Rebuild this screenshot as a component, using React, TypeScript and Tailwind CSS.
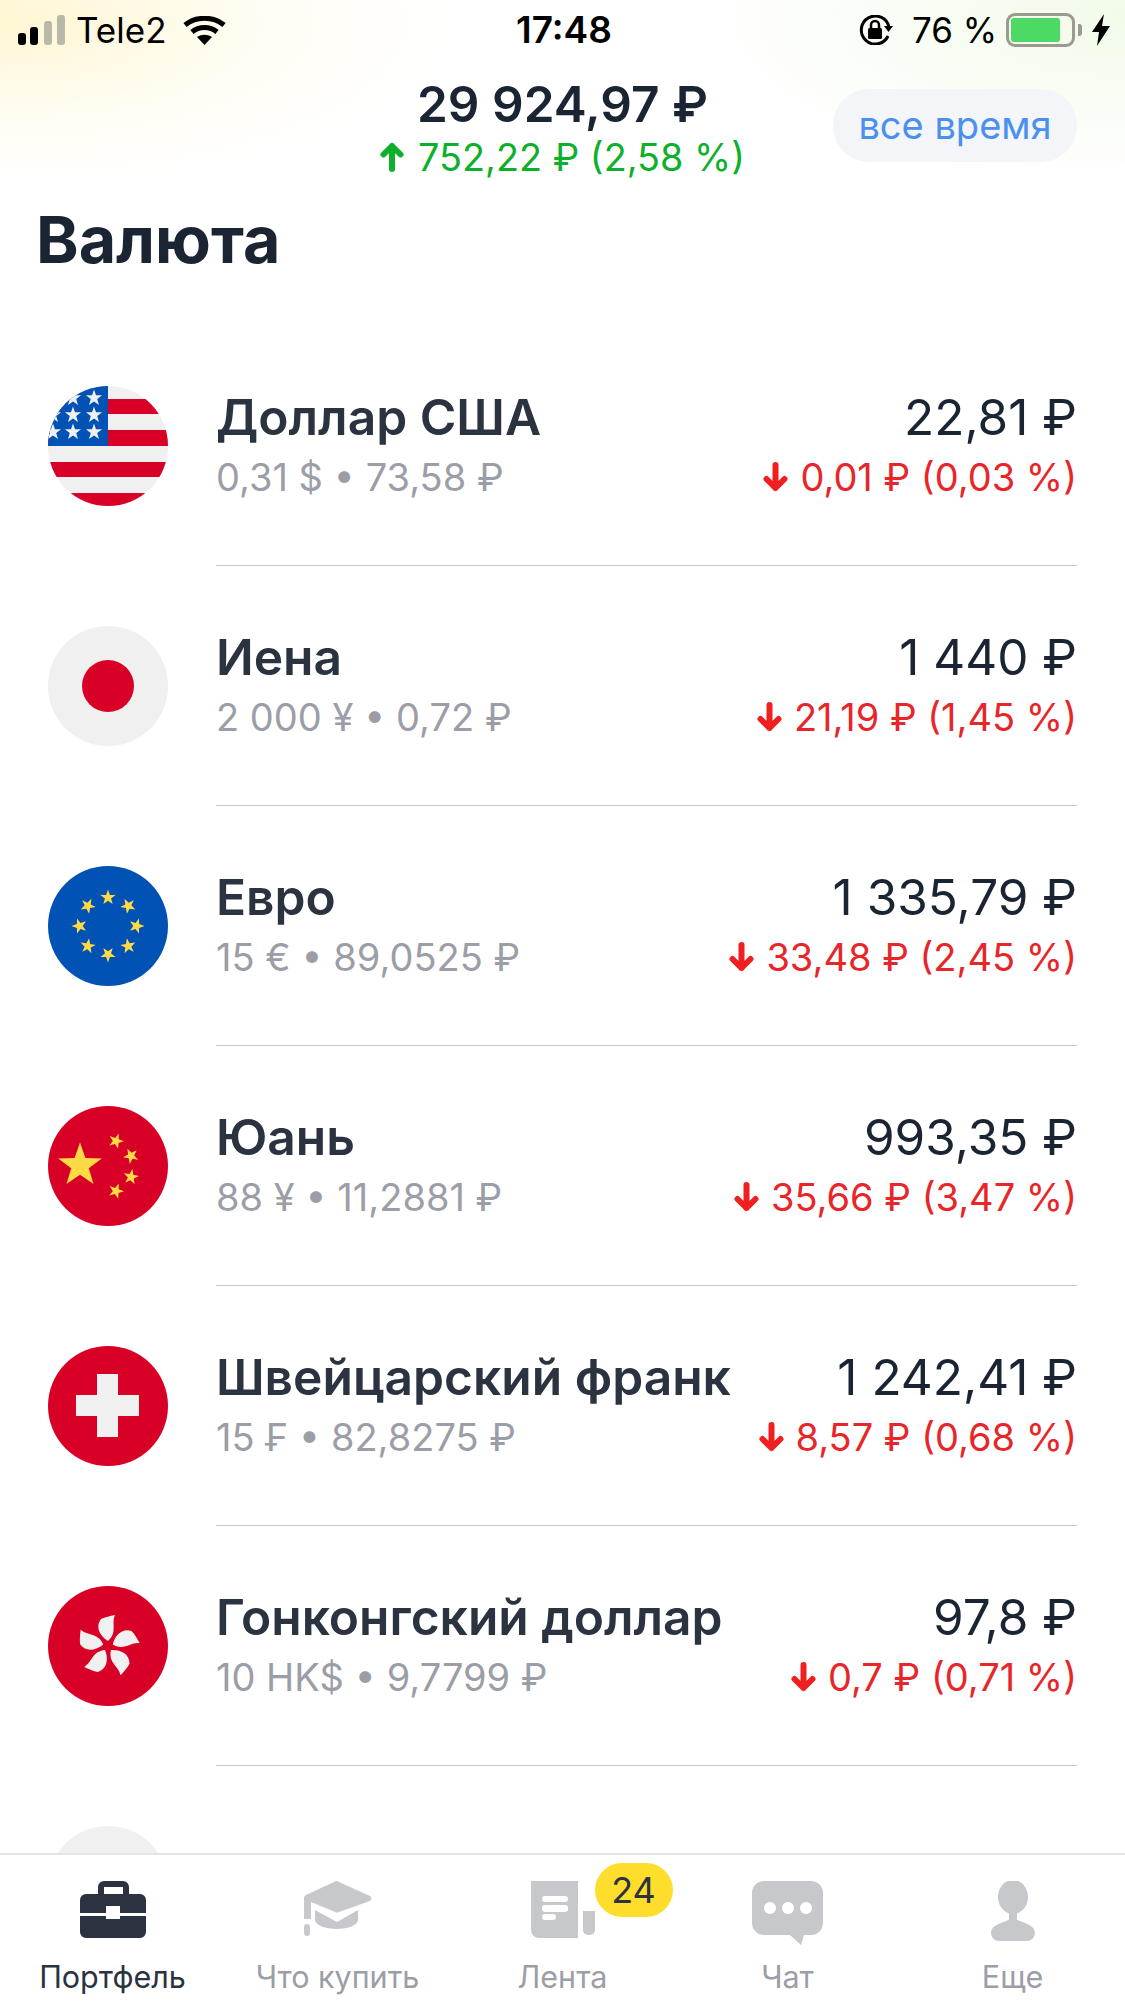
import React from 'react';

const starPoints = (cx: number, cy: number, r: number, rot = 0) => {
  const pts: string[] = [];
  for (let i = 0; i < 10; i++) {
    const rad = i % 2 === 0 ? r : r * 0.4;
    const a = ((-90 + rot + i * 36) * Math.PI) / 180;
    pts.push(`${(cx + rad * Math.cos(a)).toFixed(2)},${(cy + rad * Math.sin(a)).toFixed(2)}`);
  }
  return pts.join(' ');
};

const Star = ({ x, y, r, fill, rot = 0 }: { x: number; y: number; r: number; fill: string; rot?: number }) => (
  <polygon points={starPoints(x, y, r, rot)} fill={fill} />
);

const Flag: React.FC<{ children: React.ReactNode; id: string }> = ({ children, id }) => (
  <svg viewBox="0 0 120 120" className="w-[120px] h-[120px] shrink-0 mt-[60px]">
    <clipPath id={id}>
      <circle cx="60" cy="60" r="60" />
    </clipPath>
    <g clipPath={`url(#${id})`}>{children}</g>
  </svg>
);

const UsFlag = () => (
  <Flag id="us">
    <rect width="120" height="120" fill="#f0f0f0" />
    <rect y="13" width="120" height="15" fill="#d80027" />
    <rect y="44" width="120" height="16" fill="#d80027" />
    <rect y="76" width="120" height="15" fill="#d80027" />
    <rect y="107" width="120" height="13" fill="#d80027" />
    <rect width="60" height="60" fill="#0052b4" />
    {[
      [25, 12],
      [46, 12],
      [25, 29],
      [46, 29],
      [5, 29],
      [5, 46],
      [25, 46],
      [46, 46],
    ].map(([x, y]) => (
      <Star key={`${x}-${y}`} x={x} y={y} r={8.5} fill="#f0f0f0" />
    ))}
  </Flag>
);

const JpFlag = () => (
  <Flag id="jp">
    <rect width="120" height="120" fill="#f0f0f0" />
    <circle cx="60" cy="60" r="26" fill="#d80027" />
  </Flag>
);

const EuFlag = () => (
  <Flag id="eu">
    <rect width="120" height="120" fill="#0052b4" />
    {[0, 45, 90, 135, 180, 225, 270, 315].map((a) => (
      <Star
        key={a}
        x={60 + 28.5 * Math.sin((a * Math.PI) / 180)}
        y={60 - 28.5 * Math.cos((a * Math.PI) / 180)}
        r={8}
        fill="#ffda44"
        rot={a}
      />
    ))}
  </Flag>
);

const CnFlag = () => (
  <Flag id="cn">
    <rect width="120" height="120" fill="#d80027" />
    <Star x={32} y={59.5} r={23} fill="#ffda44" />
    <Star x={68} y={35} r={8} fill="#ffda44" rot={20} />
    <Star x={83} y={50} r={8} fill="#ffda44" rot={45} />
    <Star x={83} y={71} r={8} fill="#ffda44" rot={10} />
    <Star x={68} y={85} r={8} fill="#ffda44" rot={20} />
  </Flag>
);

const ChFlag = () => (
  <Flag id="ch">
    <rect width="120" height="120" fill="#d80027" />
    <path d="M49 28h21v21h21v21H70v21H49V70H28V49h21z" fill="#f0f0f0" />
  </Flag>
);

const HkFlag = () => (
  <Flag id="hk">
    <rect width="120" height="120" fill="#d80027" />
    {[0, 72, 144, 216, 288].map((a) => (
      <path
        key={a}
        transform={`rotate(${a} 60 60)`}
        d="M60 55 C52 50 47 41 53 33 C57 31 62 30 67 29 C63 38 70 46 60 55z"
        fill="#f0f0f0"
      />
    ))}
  </Flag>
);

const BlankFlag = () => (
  <Flag id="blank">
    <rect width="120" height="120" fill="#f0f0f0" />
  </Flag>
);

const ArrowDown = () => (
  <svg viewBox="0 0 25 30" className="w-[25px] h-[30px] shrink-0">
    <path d="M12.500 3v23M3.500 17l9 9 9-9" fill="none" stroke="#f02020" strokeWidth="6" strokeLinecap="round" strokeLinejoin="round" />
  </svg>
);

const ArrowUp = () => (
  <svg viewBox="0 0 24 30" className="w-[24px] h-[30px] shrink-0">
    <path d="M12 27V4M3.500 12.500L12 4l8.500 8.500" fill="none" stroke="#0db02b" strokeWidth="6" strokeLinecap="round" strokeLinejoin="round" />
  </svg>
);

const rows = [
  { flag: <UsFlag />, name: 'Доллар США', sub: '0,31 $ • 73,58 ₽', price: '22,81 ₽', delta: '0,01 ₽ (0,03 %)' },
  { flag: <JpFlag />, name: 'Иена', sub: '2 000 ¥ • 0,72 ₽', price: '1 440 ₽', delta: '21,19 ₽ (1,45 %)' },
  { flag: <EuFlag />, name: 'Евро', sub: '15 € • 89,0525 ₽', price: '1 335,79 ₽', delta: '33,48 ₽ (2,45 %)' },
  { flag: <CnFlag />, name: 'Юань', sub: '88 ¥ • 11,2881 ₽', price: '993,35 ₽', delta: '35,66 ₽ (3,47 %)' },
  { flag: <ChFlag />, name: 'Швейцарский франк', sub: '15 ₣ • 82,8275 ₽', price: '1 242,41 ₽', delta: '8,57 ₽ (0,68 %)' },
  { flag: <HkFlag />, name: 'Гонконгский доллар', sub: '10 HK$ • 9,7799 ₽', price: '97,8 ₽', delta: '0,7 ₽ (0,71 %)' },
];

const StatusBar = () => (
  <div className="h-[60px] flex items-center justify-between pl-[18px] pr-[15px] text-[35px] text-black relative">
    <div className="flex items-center">
      <svg viewBox="0 0 47 30" className="w-[47px] h-[30px]">
        <rect x="0" y="18" width="8" height="12" rx="3" fill="#000" />
        <rect x="12" y="12" width="8" height="18" rx="3" fill="#000" />
        <rect x="26" y="6" width="8" height="24" rx="3" fill="#b9b9a8" />
        <rect x="39" y="0" width="8" height="30" rx="3" fill="#b9b9a8" />
      </svg>
      <span className="ml-[11px] w-[89px]">Tele2</span>
      <svg viewBox="0 0 43 29" className="ml-[18px] w-[43px] h-[29px]">
        <path d="M2 9c11-9 28-9 39 0" fill="none" stroke="#000" strokeWidth="5" />
        <path d="M9 16c7-6 18-6 25 0" fill="none" stroke="#000" strokeWidth="5" />
        <path d="M14 21c5-3 10-3 15 0l-7.500 8z" fill="#000" />
      </svg>
    </div>
    <span className="absolute left-[516px] text-[37px] font-semibold">17:48</span>
    <div className="flex items-center">
      <svg viewBox="0 0 34 30" className="w-[34px] h-[30px]">
        <path d="M29 21A14 14 0 1 1 30 12" fill="none" stroke="#000" strokeWidth="3" />
        <path d="M25 11h9l-4.500 6z" fill="#000" />
        <rect x="9" y="13" width="14" height="11" rx="1.500" fill="#000" />
        <path d="M12 13V10a4 4 0 0 1 8 0v3" fill="none" stroke="#000" strokeWidth="2.500" />
      </svg>
      <span className="ml-[19px] w-[84px] whitespace-nowrap">76 %</span>
      <div className="ml-[10px] w-[69px] h-[34px] rounded-[9px] border-[3px] border-[#9a9a8e] p-[2px] flex">
        <div className="w-[49px] h-full rounded-[3px] bg-[#4cd964]" />
      </div>
      <div className="ml-[3px] w-[4px] h-[12px] rounded-r-[3px] bg-[#9a9a8e]" />
      <svg viewBox="0 0 18 32" className="ml-[10px] w-[18px] h-[32px]">
        <path d="M12 0L0 18h7L5 32 18 12h-8z" fill="#000" />
      </svg>
    </div>
  </div>
);

const Header = () => (
  <div>
    <div className="h-[190px] bg-[radial-gradient(ellipse_460px_168px_at_0%_12%,#fff6d2_0%,#fffdf3_55%,transparent_100%),radial-gradient(ellipse_420px_165px_at_100%_8%,#f2fbea_0%,transparent_100%)]">
      <StatusBar />
      <div className="grid grid-cols-[1fr_auto_1fr] items-start">
        <div />
        <div className="flex flex-col items-center pt-[19px]">
          <div className="text-[49.5px] leading-[50px] font-semibold text-[#1a2433]">29 924,97 ₽</div>
          <div className="mt-[3px] flex items-center gap-[14px] text-[37.8px] leading-[50px] text-[#0db02b]">
            <ArrowUp />
            <span>752,22 ₽ (2,58 %)</span>
          </div>
        </div>
        <div className="justify-self-end mr-[48px] mt-[29px] w-[244px] h-[73px] rounded-[36px] bg-[#f3f5f8] flex items-center justify-center text-[38px] text-[#4a90ee]">
          все время
        </div>
      </div>
    </div>
    <div className="mt-[14px] mb-[50px] pl-[36px] text-[64.5px] leading-[72px] font-bold text-[#1a2433]">Валюта</div>
  </div>
);

const Row: React.FC<(typeof rows)[number]> = ({ flag, name, sub, price, delta }) => (
  <div className="flex pl-[48px]">
    {flag}
    <div className="ml-[48px] mr-[48px] flex-1 h-[240px] border-b border-[#c8c8cc] flex justify-between pt-[61px]">
      <div>
        <div className="text-[49.7px] leading-[60px] font-semibold text-[#2b3341] whitespace-nowrap">{name}</div>
        <div className="text-[38px] leading-[60px] text-[#9b9ea6]">{sub}</div>
      </div>
      <div className="flex flex-col items-end">
        <div className="text-[49.5px] leading-[60px] text-[#1a2433] whitespace-nowrap">{price}</div>
        <div className="flex items-center gap-[12px] text-[38px] leading-[60px] text-[#e8262a] whitespace-nowrap">
          <ArrowDown />
          <span>{delta}</span>
        </div>
      </div>
    </div>
  </div>
);

const tabs = [
  {
    label: 'Портфель',
    active: true,
    icon: (
      <svg viewBox="0 0 66 57" className="block w-[66px] h-[57px]">
        <path d="M18 13V6a6 6 0 0 1 6-6h19a6 6 0 0 1 6 6v7h-6V6H24v7z" fill="#2b3341" />
        <path d="M6 13h54a6 6 0 0 1 6 6v13H40v-7H26v7H0V19a6 6 0 0 1 6-6z" fill="#2b3341" />
        <path d="M0 35h26v3h14v-3h26v16a6 6 0 0 1-6 6H6a6 6 0 0 1-6-6z" fill="#2b3341" />
      </svg>
    ),
  },
  {
    label: 'Что купить',
    icon: (
      <svg viewBox="0 0 68 55" className="block w-[68px] h-[55px]">
        <path d="M30 1a4 4 0 0 1 5 0l31 14a3 3 0 0 1 0 5L35 31a4 4 0 0 1-4 0L7 21v17H0V17a4 4 0 0 1 2-3z" fill="#c6c8cb" />
        <path d="M11 29l22 12 21-12v10c0 5-10 9-21 9s-22-4-22-9z" fill="#c6c8cb" />
        <rect x="0" y="43" width="6" height="12" rx="3" fill="#c6c8cb" />
      </svg>
    ),
  },
  {
    label: 'Лента',
    icon: (
      <svg viewBox="0 0 64 57" className="block w-[64px] h-[57px]">
        <path d="M0 0h47v57H8a8 8 0 0 1-8-8z" fill="#c6c8cb" />
        <rect x="11" y="15" width="26" height="6" rx="3" fill="#fff" />
        <rect x="11" y="24" width="26" height="7" rx="3" fill="#fff" />
        <rect x="11" y="33" width="14" height="6" rx="3" fill="#fff" />
        <path d="M52 30h12v19a5 5 0 0 1-5 5h-2a5 5 0 0 1-5-5z" fill="#c6c8cb" />
      </svg>
    ),
    badge: '24',
  },
  {
    label: 'Чат',
    icon: (
      <svg viewBox="0 0 71 64" className="block w-[71px] h-[64px]">
        <path d="M12 0h47a12 12 0 0 1 12 12v30a12 12 0 0 1-12 12h-7l-3 10-11-10H12A12 12 0 0 1 0 42V12A12 12 0 0 1 12 0z" fill="#c6c8cb" />
        <circle cx="18" cy="27" r="6" fill="#fff" />
        <circle cx="36" cy="27" r="6" fill="#fff" />
        <circle cx="54" cy="27" r="6" fill="#fff" />
      </svg>
    ),
  },
  {
    label: 'Еще',
    icon: (
      <svg viewBox="0 0 44 60" className="block w-[44px] h-[60px]">
        <ellipse cx="22" cy="16" rx="15" ry="17" fill="#c6c8cb" />
        <path d="M18 30h8v8c0 3 18 4 18 14a8 8 0 0 1-8 8H8a8 8 0 0 1-8-8c0-10 18-11 18-14z" fill="#c6c8cb" />
      </svg>
    ),
  },
];

const TabBar = () => (
  <div className="h-[148px] shrink-0 border-t-2 border-[#e4e4e6] bg-white grid grid-cols-5">
    {tabs.map((t) => (
      <div key={t.label} className="flex flex-col items-center">
        <div className="relative h-[76px] mt-[26px] flex items-start justify-center">
          {t.icon}
          {t.badge && (
            <div className="absolute left-[64px] top-[-18px] w-[78px] h-[54px] rounded-[27px] bg-[#ffdd2d] flex items-center justify-center text-[36px] text-[#2b3341]">
              {t.badge}
            </div>
          )}
        </div>
        <div className={`text-[30.5px] leading-[40px] whitespace-nowrap ${t.active ? 'text-[#2b3341]' : 'text-[#9b9ea6]'}`}>{t.label}</div>
      </div>
    ))}
  </div>
);

export default function App() {
  return (
    <div className="w-[1125px] h-[2001px] bg-white overflow-hidden flex flex-col font-['Inter','Liberation_Sans',sans-serif]">
      <Header />
      <div className="flex-1 overflow-hidden min-h-0">
        {rows.map((r) => (
          <Row key={r.name} {...r} />
        ))}
        <div className="pl-[48px]">
          <BlankFlag />
        </div>
      </div>
      <TabBar />
    </div>
  );
}
